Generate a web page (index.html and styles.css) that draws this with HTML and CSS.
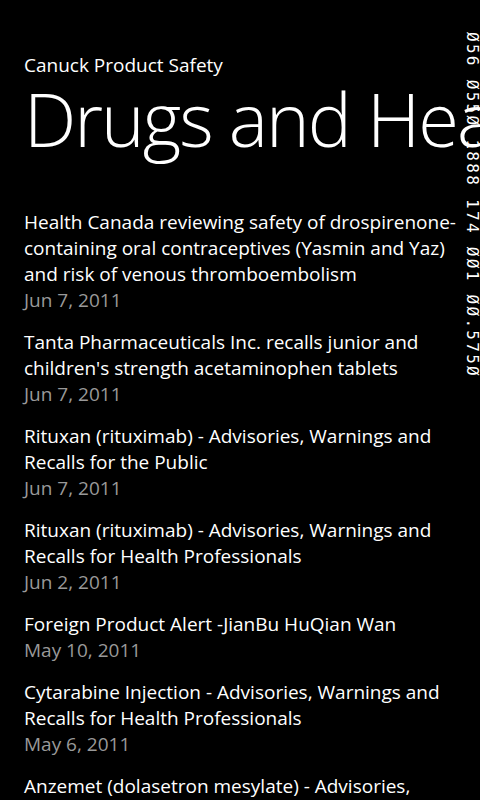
FILE: index.html
```html
<!DOCTYPE html>
<html>
<head>
<meta charset="utf-8">
<link rel="stylesheet" href="styles.css">
</head>
<body>
<div class="page">
  <header class="head">
    <div class="app-title">Canuck Product Safety</div>
    <h1 class="page-title">Drugs and Health Products</h1>
  </header>
  <ul class="feed">
    <li class="item">
      <div class="item-title">Health Canada reviewing safety of drospirenone-containing oral contraceptives (Yasmin and Yaz) and risk of venous thromboembolism</div>
      <div class="item-date">Jun 7, 2011</div>
    </li>
    <li class="item">
      <div class="item-title">Tanta Pharmaceuticals Inc. recalls junior and children's strength acetaminophen tablets</div>
      <div class="item-date">Jun 7, 2011</div>
    </li>
    <li class="item">
      <div class="item-title">Rituxan (rituximab) - Advisories, Warnings and Recalls for the Public</div>
      <div class="item-date">Jun 7, 2011</div>
    </li>
    <li class="item">
      <div class="item-title">Rituxan (rituximab) - Advisories, Warnings and Recalls for Health Professionals</div>
      <div class="item-date">Jun 2, 2011</div>
    </li>
    <li class="item">
      <div class="item-title">Foreign Product Alert -JianBu HuQian Wan</div>
      <div class="item-date">May 10, 2011</div>
    </li>
    <li class="item">
      <div class="item-title">Cytarabine Injection - Advisories, Warnings and Recalls for Health Professionals</div>
      <div class="item-date">May 6, 2011</div>
    </li>
    <li class="item">
      <div class="item-title">Anzemet (dolasetron mesylate) - Advisories, Warnings and Recalls for Health Professionals</div>
      <div class="item-date">May 5, 2011</div>
    </li>
  </ul>
  <div class="counter">Ø56 Ø55Ø 1888 174 ØØ1 ØØ.575Ø</div>
</div>
</body>
</html>
```

FILE: styles.css
```css
html, body {
  margin: 0;
  padding: 0;
  background: #000;
  height: 100%;
  overflow: hidden;
}
body {
  font-family: "Open Sans", "Noto Sans", sans-serif;
  color: #fff;
}
.page {
  position: relative;
  width: 480px;
  height: 800px;
  overflow: hidden;
}
.head {
  padding: 52px 0 0 24px;
}
.app-title {
  font-size: 19px;
  line-height: 26px;
  white-space: nowrap;
}
.page-title {
  margin: 0;
  font-size: 74px;
  font-weight: 300;
  line-height: 81px;
  white-space: nowrap;
  letter-spacing: -2px;
}
.feed {
  list-style: none;
  margin: 0;
  padding: 50px 24px 0 24px;
  display: flex;
  flex-direction: column;
  gap: 16px;
}
.item-title {
  font-size: 19px;
  line-height: 26px;
}
.item-date {
  font-size: 19px;
  line-height: 26px;
  color: #999;
}
.counter {
  position: absolute;
  top: 32px;
  right: 1px;
  writing-mode: vertical-rl;
  font-family: "DejaVu Sans Mono", monospace;
  font-size: 16px;
  line-height: 14px;
  letter-spacing: 2.3px;
  color: #fff;
  white-space: pre;
}
```
